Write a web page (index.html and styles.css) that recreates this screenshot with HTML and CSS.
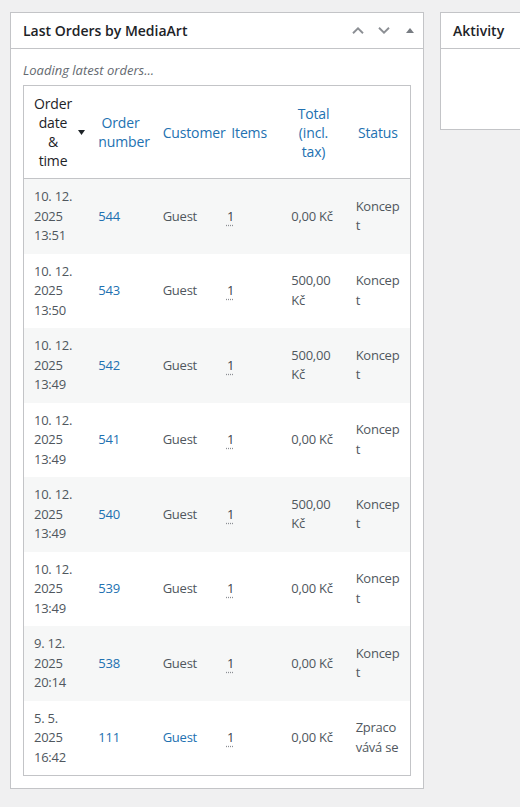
FILE: index.html
```html
<!DOCTYPE html>
<html lang="cs">
<head>
<meta charset="utf-8">
<title>Nástěnka</title>
<link rel="stylesheet" href="styles.css">
</head>
<body>
<div class="dashboard">
  <div class="postbox postbox-orders">
    <div class="postbox-header">
      <h2 class="hndle">Last Orders by MediaArt</h2>
      <div class="handle-actions">
        <button class="handle-btn" type="button" aria-label="Move up">
          <svg width="12" height="7" viewBox="0 0 12 7"><path d="M1 6.2 L6 1.3 L11 6.2" fill="none" stroke="currentColor" stroke-width="1.9"/></svg>
        </button>
        <button class="handle-btn" type="button" aria-label="Move down">
          <svg width="12" height="7" viewBox="0 0 12 7"><path d="M1 0.8 L6 5.7 L11 0.8" fill="none" stroke="currentColor" stroke-width="1.9"/></svg>
        </button>
        <button class="handle-btn handle-toggle" type="button" aria-label="Toggle panel">
          <svg width="8" height="5" viewBox="0 0 8 5"><polygon points="0,5 8,5 4,0" fill="currentColor"/></svg>
        </button>
      </div>
    </div>
    <div class="inside">
      <p class="loading">Loading latest orders...</p>
      <table class="orders">
        <thead>
          <tr>
            <th class="sorted">
              <span class="th-inner">
                <span class="th-label">Order date &amp; time</span>
                <span class="sort-ind"><svg width="7" height="5" viewBox="0 0 7 5"><polygon points="0,0 7,0 3.5,5" fill="currentColor"/></svg></span>
              </span>
            </th>
            <th><a href="#">Order number</a></th>
            <th><a href="#">Customer</a></th>
            <th><a href="#">Items</a></th>
            <th><a href="#">Total (incl. tax)</a></th>
            <th><a href="#">Status</a></th>
          </tr>
        </thead>
        <tbody>
          <tr>
            <td>10. 12. 2025 13:51</td>
            <td><a href="#">544</a></td>
            <td>Guest</td>
            <td><span class="qty" title="Items">1</span></td>
            <td>0,00 Kč</td>
            <td>Koncept</td>
          </tr>
          <tr>
            <td>10. 12. 2025 13:50</td>
            <td><a href="#">543</a></td>
            <td>Guest</td>
            <td><span class="qty" title="Items">1</span></td>
            <td>500,00 Kč</td>
            <td>Koncept</td>
          </tr>
          <tr>
            <td>10. 12. 2025 13:49</td>
            <td><a href="#">542</a></td>
            <td>Guest</td>
            <td><span class="qty" title="Items">1</span></td>
            <td>500,00 Kč</td>
            <td>Koncept</td>
          </tr>
          <tr>
            <td>10. 12. 2025 13:49</td>
            <td><a href="#">541</a></td>
            <td>Guest</td>
            <td><span class="qty" title="Items">1</span></td>
            <td>0,00 Kč</td>
            <td>Koncept</td>
          </tr>
          <tr>
            <td>10. 12. 2025 13:49</td>
            <td><a href="#">540</a></td>
            <td>Guest</td>
            <td><span class="qty" title="Items">1</span></td>
            <td>500,00 Kč</td>
            <td>Koncept</td>
          </tr>
          <tr>
            <td>10. 12. 2025 13:49</td>
            <td><a href="#">539</a></td>
            <td>Guest</td>
            <td><span class="qty" title="Items">1</span></td>
            <td>0,00 Kč</td>
            <td>Koncept</td>
          </tr>
          <tr>
            <td>9. 12. 2025 20:14</td>
            <td><a href="#">538</a></td>
            <td>Guest</td>
            <td><span class="qty" title="Items">1</span></td>
            <td>0,00 Kč</td>
            <td>Koncept</td>
          </tr>
          <tr>
            <td>5. 5. 2025 16:42</td>
            <td><a href="#">111</a></td>
            <td><a href="#">Guest</a></td>
            <td><span class="qty" title="Items">1</span></td>
            <td>0,00 Kč</td>
            <td>Zpracovává se</td>
          </tr>
        </tbody>
      </table>
    </div>
  </div>

  <div class="postbox postbox-activity">
    <div class="postbox-header">
      <h2 class="hndle">Aktivity</h2>
    </div>
    <div class="inside inside-empty"></div>
  </div>
</div>
</body>
</html>
```

FILE: styles.css
```css
html, body {
  margin: 0;
  padding: 0;
  overflow: hidden;
}

body {
  background: #f0f0f1;
  color: #3c434a;
  font-family: "Open Sans", "Noto Sans", "Liberation Sans", sans-serif;
  font-size: 13px;
  line-height: 1.4;
}

a {
  color: #2271b1;
  text-decoration: none;
}

.dashboard {
  display: flex;
  align-items: flex-start;
  gap: 16px;
  padding: 12px 0 0 10px;
}

.postbox {
  background: #fff;
  border: 1px solid #c3c4c7;
  box-sizing: border-box;
}

.postbox-orders {
  flex: none;
  width: 414px;
}

.postbox-activity {
  flex: 1 1 auto;
  min-width: 0;
  border-right: 0;
}

.postbox-header {
  display: flex;
  align-items: center;
  justify-content: space-between;
  height: 35px;
  border-bottom: 1px solid #c3c4c7;
}

.hndle {
  margin: 0;
  padding: 0 12px;
  font-size: 14px;
  font-weight: 600;
  line-height: 19px;
  color: #1d2327;
  white-space: nowrap;
}

.handle-actions {
  display: flex;
  align-items: center;
  height: 100%;
}

.handle-btn {
  display: flex;
  align-items: center;
  justify-content: center;
  width: 26px;
  height: 35px;
  padding: 0;
  margin: 0;
  border: 0;
  background: none;
  color: #8c8f94;
  cursor: pointer;
}

.handle-toggle {
  color: #787c82;
  padding-bottom: 1px;
}

.inside {
  padding: 11px 12px 12px;
}

.inside-empty {
  height: 80px;
  box-sizing: border-box;
}

.loading {
  margin: 0 0 5px;
  font-style: italic;
  line-height: 20px;
  color: #646970;
}

.orders {
  width: 100%;
  table-layout: fixed;
  border-collapse: separate;
  border-spacing: 0;
  border: 1px solid #c3c4c7;
  background: #fff;
}

.orders th {
  padding: 8px 10px;
  font-size: 14px;
  font-weight: 400;
  line-height: 19px;
  letter-spacing: -0.15px;
  text-align: center;
  vertical-align: middle;
  color: #1d2327;
  border-bottom: 1px solid #c3c4c7;
}

.th-inner {
  display: flex;
  align-items: center;
  gap: 6px;
}

.th-label {
  text-align: center;
}

.sort-ind {
  display: flex;
  flex: none;
  color: #1d2327;
}

.orders td {
  padding: 8px 10px;
  font-size: 13px;
  line-height: 19.5px;
  letter-spacing: -0.25px;
  color: #50575e;
  vertical-align: middle;
  text-align: left;
  overflow-wrap: break-word;
}

.orders tbody tr:nth-child(odd) td {
  background: #f6f7f7;
}

.qty {
  color: #3c434a;
  text-decoration: underline dotted #8c8f94;
  text-underline-offset: 4px;
}
```
